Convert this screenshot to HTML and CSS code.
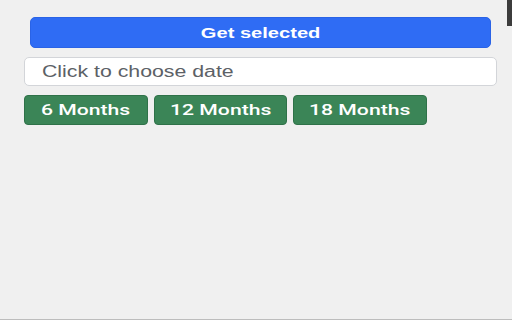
FILE: index.html
```html
<!DOCTYPE html>
<html lang="en">
<head>
<meta charset="utf-8">
<title>Date picker</title>
<link rel="stylesheet" href="styles.css">
</head>
<body>
<div class="panel">
  <button class="btn-primary"><span class="wide">Get selected</span></button>
  <div class="date-field" role="textbox"><span class="wide placeholder">Click to choose date</span></div>
  <div class="presets">
    <button class="btn-preset p6"><span class="wide">6 Months</span></button>
    <button class="btn-preset p12"><span class="wide">12 Months</span></button>
    <button class="btn-preset p18"><span class="wide">18 Months</span></button>
  </div>
</div>
<div class="corner"></div>
</body>
</html>
```
FILE: styles.css
```css
html, body {
  margin: 0;
  padding: 0;
  height: 100%;
}
body {
  background: #f0f0f0;
  font-family: "Liberation Sans", Arial, sans-serif;
  box-sizing: border-box;
  border-bottom: 1px solid #bdbdbd;
  position: relative;
}
.panel {
  display: flex;
  flex-direction: column;
  gap: 9px;
  padding: 17px 0 0 24px;
  width: 473px;
}
.wide {
  display: inline-block;
  transform: scaleX(1.33);
  white-space: nowrap;
}
.btn-primary {
  margin: 0 6px;
  height: 31px;
  border: 1px solid #2a63e6;
  border-radius: 5px;
  background: #2f6cf4;
  color: #fff;
  font-family: inherit;
  font-size: 15px;
  font-weight: bold;
  padding: 0;
}
.btn-primary .wide {
  transform: scaleX(1.34);
}
.date-field {
  box-sizing: border-box;
  height: 29px;
  border: 1px solid #d3d5d9;
  border-radius: 5px;
  background: #fff;
  display: flex;
  align-items: center;
  padding-left: 17px;
}
.placeholder {
  color: #5c6166;
  font-size: 16px;
  transform-origin: left center;
}
.presets {
  display: flex;
  gap: 6px;
}
.btn-preset {
  height: 30px;
  border: 1px solid #2f7249;
  border-radius: 4px;
  background: #3b8557;
  color: #fff;
  font-family: Roboto, "Liberation Sans", sans-serif;
  font-size: 14.5px;
  font-weight: 500;
  padding: 0;
}
.btn-preset .wide {
  transform: scaleX(1.46);
}
.p6 { width: 124px; }
.p12 { width: 133px; }
.p18 { width: 134px; }
.corner {
  position: absolute;
  top: 0;
  right: 0;
  width: 5px;
  height: 26px;
  background: #3c3c3c;
}
```
